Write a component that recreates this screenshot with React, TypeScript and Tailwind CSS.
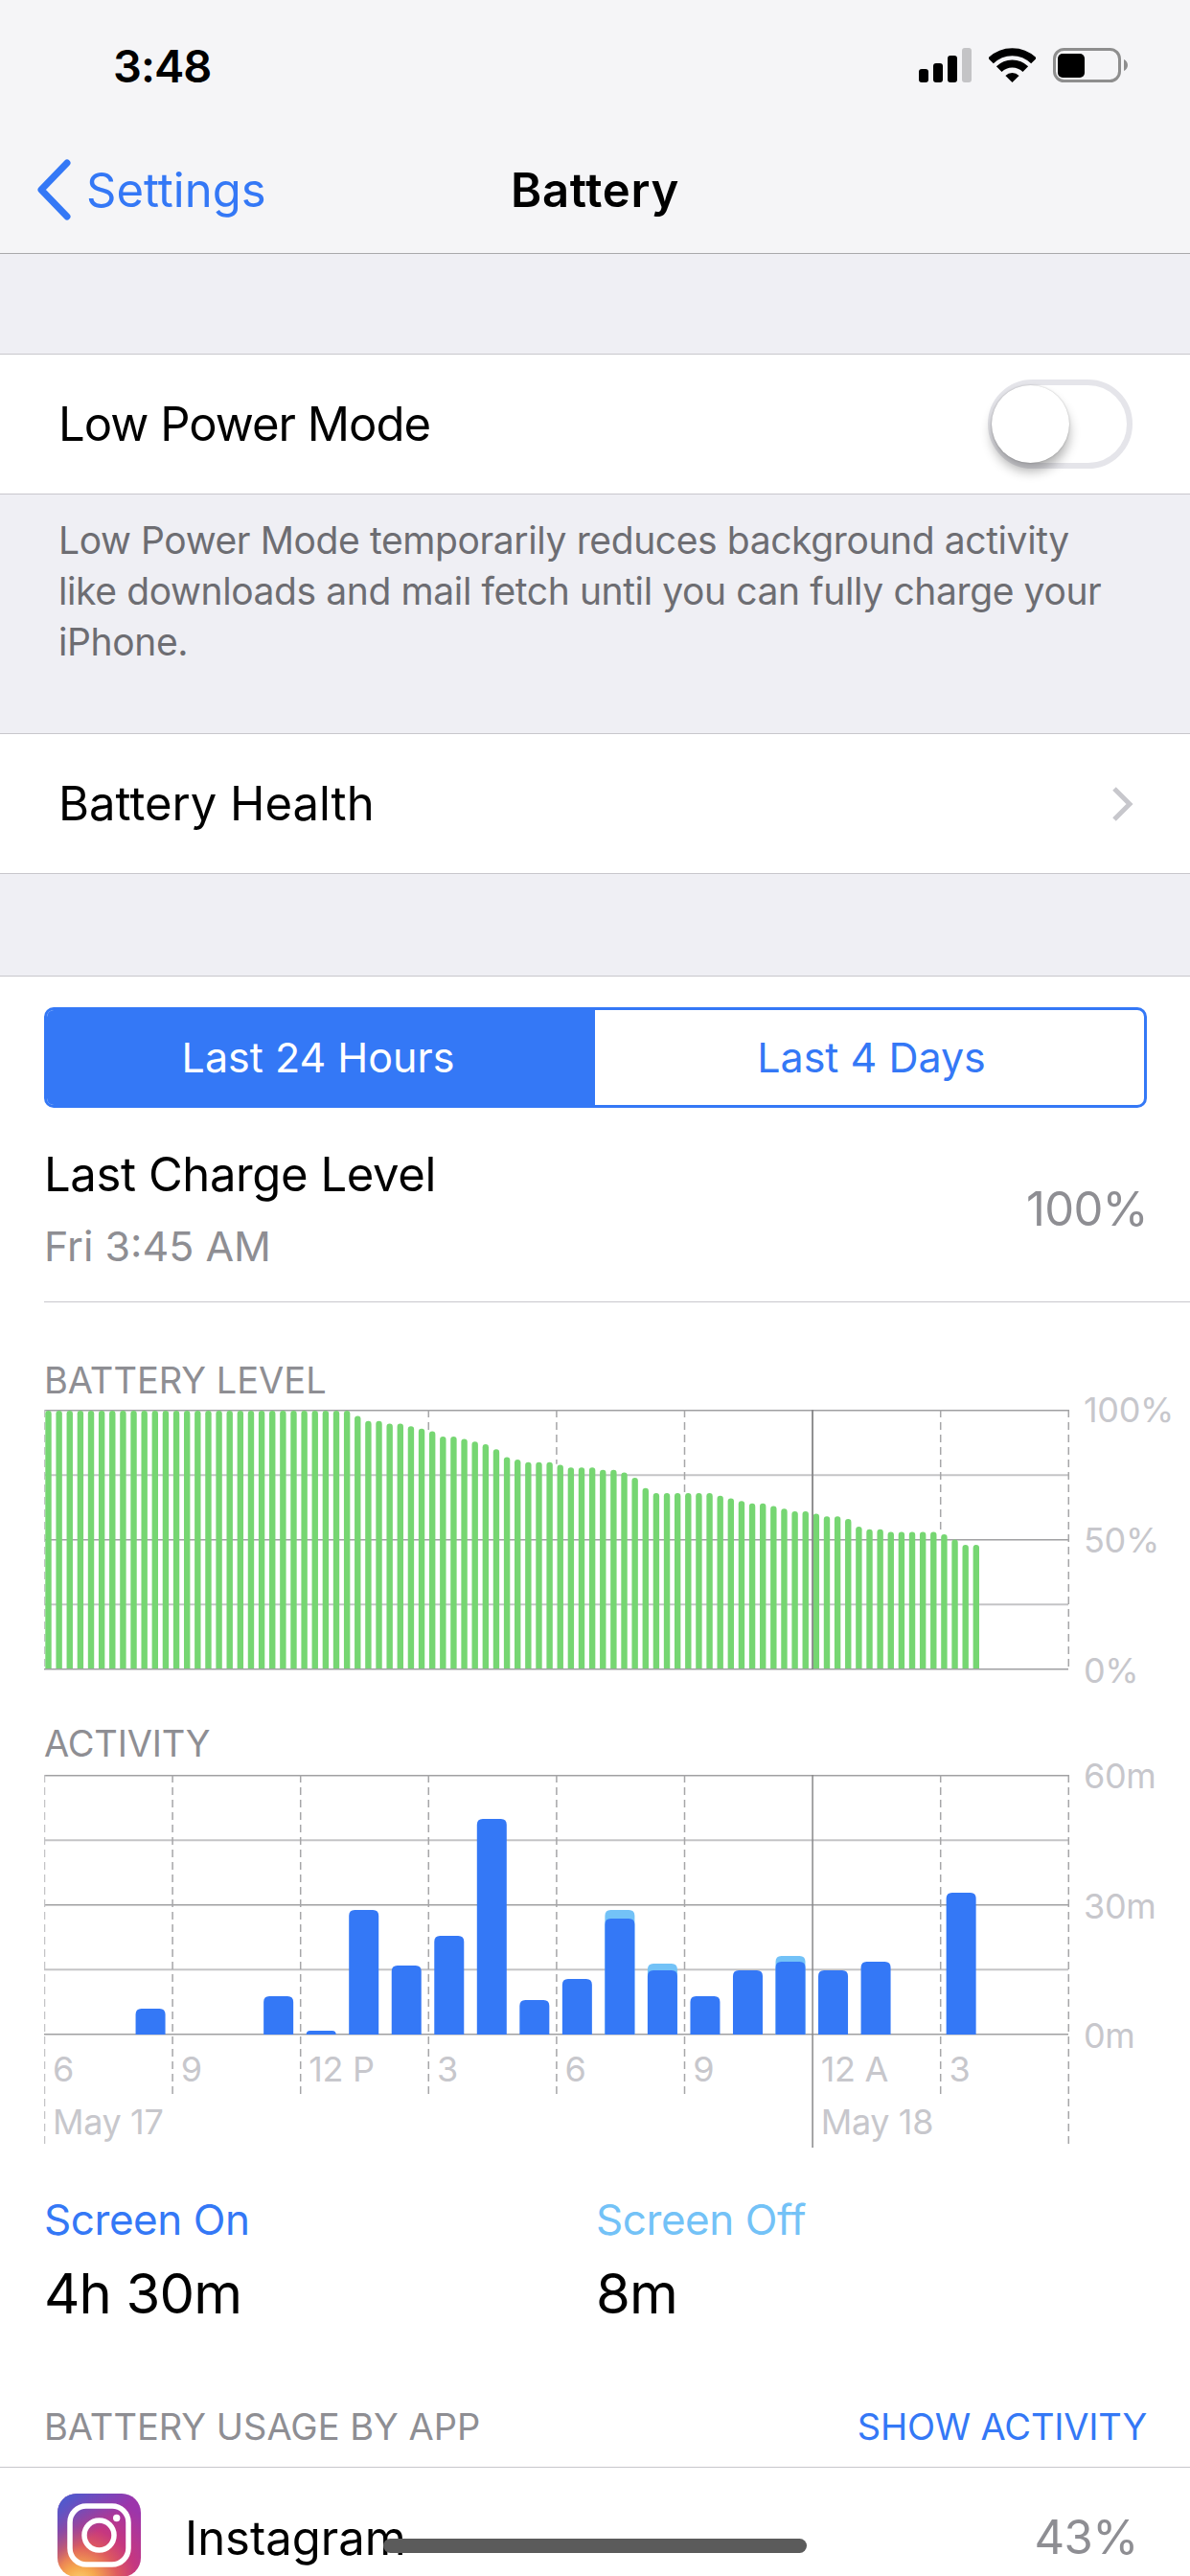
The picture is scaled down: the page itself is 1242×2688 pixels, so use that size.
import React from "react";

const font = { fontFamily: "Inter, 'Liberation Sans', sans-serif" };

// battery level per hour slot, read off the chart (percent)
const levels = [
  100, 100, 100, 100, 100, 100, 100, 100, 100, 100, 100, 100, 100, 100, 100, 100, 100, 100, 100, 100, 100, 100, 100, 100, 100, 100, 100, 100, 100,
  98, 96, 96, 95, 95, 94, 93, 92, 90, 90, 89, 88, 87, 85, 82, 81, 80, 80, 80, 79, 78, 78, 78, 77, 77, 76, 74, 70, 68, 68, 68, 68, 68, 68, 67, 66, 65,
  64, 64, 63, 62, 61, 61, 60, 59, 59, 58, 55, 54, 54, 53, 53, 53, 53, 53, 52, 50, 48, 48,
];

const activity = [
  { slot: 2, on: 27, off: 27 },
  { slot: 5, on: 40, off: 40 },
  { slot: 6, on: 4, off: 4 },
  { slot: 7, on: 130, off: 130 },
  { slot: 8, on: 72, off: 72 },
  { slot: 9, on: 103, off: 103 },
  { slot: 10, on: 225, off: 225 },
  { slot: 11, on: 36, off: 36 },
  { slot: 12, on: 58, off: 58 },
  { slot: 13, on: 121, off: 130 },
  { slot: 14, on: 67, off: 74 },
  { slot: 15, on: 40, off: 40 },
  { slot: 16, on: 67, off: 67 },
  { slot: 17, on: 76, off: 82 },
  { slot: 18, on: 67, off: 67 },
  { slot: 19, on: 76, off: 76 },
  { slot: 21, on: 148, off: 148 },
];

const STEP = 133.6;
const W = 1071;

function topRounded(x: number, w: number, bottom: number, h: number, r: number) {
  const t = bottom - h;
  const rr = Math.min(r, h);
  return `M${x} ${bottom}V${t + rr}Q${x} ${t} ${x + rr} ${t}H${x + w - rr}Q${x + w} ${t} ${x + w} ${t + rr}V${bottom}Z`;
}

function Grid({ dashEnd, longBottom }: { dashEnd: (i: number) => number; longBottom: number }) {
  const rows = [0, 1, 2, 3, 4];
  return (
    <g>
      {rows.map((r) => {
        const y = 0.75 + (r * 270) / 4;
        const light = r === 1 || r === 3;
        return <line key={r} x1={0} x2={1069} y1={y} y2={y} stroke={light ? "#c4c4c6" : "#a0a0a2"} strokeWidth={light ? 2 : 1.5} />;
      })}
      {[0, 1, 2, 3, 4, 5, 7, 8].map((i) => {
        const edge = i === 0 || i === 8;
        return (
          <line
            key={i}
            x1={i * STEP + 0.5}
            x2={i * STEP + 0.5}
            y1={0}
            y2={edge ? longBottom : dashEnd(i)}
            stroke={i === 0 ? "#c4c4c6" : "#a6a6a8"}
            strokeWidth={1.5}
            strokeDasharray="8 5"
          />
        );
      })}
      <line x1={6 * STEP + 0.5} x2={6 * STEP + 0.5} y1={0} y2={longBottom} stroke="#88888a" strokeWidth={1.5} />
    </g>
  );
}

function StatusIcons() {
  return (
    <div className="flex items-center gap-[18px]">
      <svg width="55" height="36" viewBox="0 0 55 36">
        <rect x="0" y="22" width="10" height="14" rx="3" fill="#000" />
        <rect x="15" y="16" width="10" height="20" rx="3" fill="#000" />
        <rect x="30" y="8" width="10" height="28" rx="3" fill="#000" />
        <rect x="45" y="0" width="10" height="36" rx="3" fill="#c4c4c6" />
      </svg>
      <svg width="49" height="36" viewBox="0 0 49 36">
        <path d="M2 13.5A31.8 31.8 0 0 1 47 13.5" fill="none" stroke="#000" strokeWidth="8" />
        <path d="M10.7 22.2A19.5 19.5 0 0 1 38.3 22.2" fill="none" stroke="#000" strokeWidth="8" />
        <path d="M24.5 36L17.4 28.9A10 10 0 0 1 31.6 28.9Z" fill="#000" />
      </svg>
      <svg width="78" height="36" viewBox="0 0 78 36">
        <rect x="1.5" y="1.5" width="68" height="33" rx="10" fill="none" stroke="#8e8e8e" strokeWidth="3" />
        <rect x="5" y="6" width="28" height="25" rx="5" fill="#000" />
        <path d="M74 12C76.5 13 78 15.5 78 18S76.5 23 74 24Z" fill="#8e8e8e" />
      </svg>
    </div>
  );
}

function BatteryChart() {
  // the dashes stop where they hit the top of a bar
  const dashEnd = (i: number) => ((100 - levels[i * 12]) / 100) * 270;
  return (
    <div className="flex h-[300px]">
      <svg width={W} height="272" viewBox="0 0 1071 272" className="shrink-0">
        <Grid dashEnd={dashEnd} longBottom={271} />
        {levels.map((lv, i) => (
          <path key={i} d={topRounded(i * 11.13 + 1.3, 6.4, 270, (lv / 100) * 269, 3.2)} fill="#76d672" />
        ))}
        <line x1={6 * STEP + 0.5} x2={6 * STEP + 0.5} y1={0} y2={271} stroke="#88888a" strokeWidth={1.5} />
      </svg>
      <div className="flex h-[272px] flex-col justify-between pl-[14px] text-[36px] leading-none text-[#c7c7cc] -tracking-[0.01em]">
        <span className="-mt-[18px]">100%</span>
        <span>50%</span>
        <span className="-mb-[18px]">0%</span>
      </div>
    </div>
  );
}

function ActivityChart() {
  return (
    <div className="relative flex h-[389px]">
      <svg width={W} height="389" viewBox="0 0 1071 389" className="shrink-0">
        <Grid dashEnd={() => 338} longBottom={389} />
        {activity.map((b) => (
          <g key={b.slot}>
            {b.off > b.on && <path d={topRounded(b.slot * 44.53 + 6.5, 31, 271, b.off, 6)} fill="#73c2f7" />}
            <path d={topRounded(b.slot * 44.53 + 6.5, 31, 271, b.on, 6)} fill="#3478f6" />
          </g>
        ))}
      </svg>
      <div className="flex h-[272px] flex-col justify-between pl-[14px] text-[36px] leading-none text-[#c7c7cc] -tracking-[0.01em]">
        <span className="-mt-[17px]">60m</span>
        <span>30m</span>
        <span className="-mb-[18px]">0m</span>
      </div>
      <div className="absolute left-0 top-[280px] grid w-[1069px] grid-cols-8 text-[36px] leading-[55px] text-[#c7c7cc] -tracking-[0.01em]">
        {["6", "9", "12 P", "3", "6", "9", "12 A", "3"].map((t, i) => (
          <span key={i} className="pl-[9px]">{t}</span>
        ))}
        <span className="col-span-6 pl-[9px]">May 17</span>
        <span className="col-span-2 pl-[9px]">May 18</span>
      </div>
    </div>
  );
}

function InstagramIcon() {
  return (
    <svg width="87" height="87" viewBox="0 0 87 87" className="shrink-0">
      <defs>
        <radialGradient id="igBase" cx="0.27" cy="1.08" r="1.1">
          <stop offset="0" stopColor="#fdd774" />
          <stop offset="0.18" stopColor="#f6a94e" />
          <stop offset="0.42" stopColor="#de5a5e" />
          <stop offset="0.62" stopColor="#c6377f" />
          <stop offset="1" stopColor="#9c35ab" />
        </radialGradient>
        <linearGradient id="igBlue" x1="0.1" y1="0" x2="0.5" y2="0.45">
          <stop offset="0" stopColor="#4a5cd0" />
          <stop offset="1" stopColor="#4a5cd0" stopOpacity="0" />
        </linearGradient>
      </defs>
      <rect width="87" height="87" rx="20" fill="url(#igBase)" />
      <rect width="87" height="87" rx="20" fill="url(#igBlue)" />
      <rect x="13" y="13" width="61" height="61" rx="17" fill="none" stroke="#fff" strokeWidth="5.5" />
      <circle cx="43.5" cy="43.5" r="15.5" fill="none" stroke="#fff" strokeWidth="5.5" />
      <circle cx="61.7" cy="25.5" r="3.7" fill="#fff" />
    </svg>
  );
}

export default function App() {
  return (
    <div className="relative h-[2688px] w-[1242px] overflow-hidden bg-white text-black" style={font}>
      <header className="h-[265px] border-b-[1.5px] border-[#a9a9ab] bg-[#f5f5f7]">
        <div className="flex h-[136px] items-center justify-between pl-[118px] pr-[65px]">
          <span className="text-[47px] font-semibold leading-none -tracking-[0.02em]">3:48</span>
          <StatusIcons />
        </div>
        <div className="relative flex h-[124px] items-center pl-[38px]">
          <svg width="36" height="64" viewBox="0 0 36 64" className="-mt-[1px]">
            <path d="M32 4L5 32L32 60" fill="none" stroke="#3478f6" strokeWidth="7" strokeLinecap="round" strokeLinejoin="round" />
          </svg>
          <span className="ml-[16px] text-[49px] leading-none text-[#3478f6]">Settings</span>
          <span className="absolute left-0 right-0 text-center text-[49px] font-semibold leading-none tracking-[0.015em]">Battery</span>
        </div>
      </header>

      <div className="h-[105px] border-b-[1.5px] border-[#c8c7cc] bg-[#efeff4]" />

      <div className="flex h-[146px] items-center justify-between border-b-[1.5px] border-[#c8c7cc] pl-[61px] pr-[60px]">
        <span className="text-[49px] leading-none -tracking-[0.02em]">Low Power Mode</span>
        <div className="relative h-[93px] w-[151px] rounded-full border-[6px] border-[#e5e5ea] bg-white">
          <div className="absolute left-[-2px] top-0 h-[81px] w-[81px] rounded-full bg-white shadow-[0_9px_12px_rgba(0,0,0,0.3),0_0_2px_rgba(0,0,0,0.25)]" />
        </div>
      </div>

      <div className="h-[250px] border-b-[1.5px] border-[#c8c7cc] bg-[#efeff4] pl-[61px] pt-[21px] text-[39px] leading-[53px] text-[#6d6d72] -tracking-[0.01em]">
        <p>Low Power Mode temporarily reduces background activity</p>
        <p>like downloads and mail fetch until you can fully charge your</p>
        <p>iPhone.</p>
      </div>

      <div className="flex h-[146px] items-center justify-between border-b-[1.5px] border-[#c8c7cc] pl-[61px] pr-[59px]">
        <span className="text-[49px] leading-none">Battery Health</span>
        <svg width="24" height="38" viewBox="0 0 24 38">
          <path d="M4 3L20 19L4 35" fill="none" stroke="#c7c7cc" strokeWidth="5" />
        </svg>
      </div>

      <div className="h-[107px] border-b-[1.5px] border-[#c8c7cc] bg-[#efeff4]" />

      <section className="pl-[46px] pt-[32px]">
        <div className="flex h-[105px] w-[1151px] overflow-hidden rounded-[10px] border-[3px] border-[#3478f6] text-[43px]">
          <div className="flex w-[572px] shrink-0 items-center justify-center bg-[#3478f6] pr-[6px] text-white">Last 24 Hours</div>
          <div className="flex flex-1 items-center justify-center pl-[4px] text-[#3478f6]">Last 4 Days</div>
        </div>

        <div className="flex h-[203px] items-center justify-between border-b-[1.5px] border-[#c8c7cc] pr-[44px]">
          <div className="mt-[10px] flex flex-col gap-[24px]">
            <span className="text-[49px] leading-[52px] -tracking-[0.008em]">Last Charge Level</span>
            <span className="text-[43px] leading-[48px] text-[#8e8e93]">Fri 3:45 AM</span>
          </div>
          <span className="mt-[8px] text-[49px] leading-none text-[#8e8e93] -tracking-[0.015em]">100%</span>
        </div>

        <h2 className="mt-[63px] h-[49px] text-[38px] leading-[36px] text-[#8e8e93]">BATTERY LEVEL</h2>
        <BatteryChart />

        <h2 className="mt-[30px] h-[51px] text-[38px] leading-[36px] text-[#8e8e93] -tracking-[0.005em]">ACTIVITY</h2>
        <ActivityChart />

        <div className="mt-[49px] flex">
          <div className="w-[576px]">
            <div className="text-[44px] leading-[52px] text-[#3478f6] -tracking-[0.01em]">Screen On</div>
            <div className="mt-[19px] text-[58px] leading-[64px] -tracking-[0.015em]">4h 30m</div>
          </div>
          <div>
            <div className="text-[44px] leading-[52px] text-[#73c2f7] -tracking-[0.01em]">Screen Off</div>
            <div className="mt-[19px] text-[58px] leading-[64px] -tracking-[0.015em]">8m</div>
          </div>
        </div>

        <div className="mt-[85px] flex items-center justify-between pr-[45px] text-[38px] leading-[44px]">
          <span className="text-[#8e8e93]">BATTERY USAGE BY APP</span>
          <span className="text-[#3478f6] -tracking-[0.005em]">SHOW ACTIVITY</span>
        </div>
      </section>

      <div className="mt-[20px] border-t-[1.5px] border-[#c8c7cc] pl-[60px] pr-[54px] pt-[27px]">
        <div className="flex items-start">
          <InstagramIcon />
          <span className="ml-[46px] mt-[19px] text-[49px] leading-[56px]">Instagram</span>
          <span className="ml-auto mt-[18px] text-[49px] leading-[56px] text-[#8e8e93] -tracking-[0.01em]">43%</span>
        </div>
      </div>

      <div className="absolute bottom-[24px] left-[400px] h-[15px] w-[442px] rounded-full bg-[#5b5b5b]" />
    </div>
  );
}
